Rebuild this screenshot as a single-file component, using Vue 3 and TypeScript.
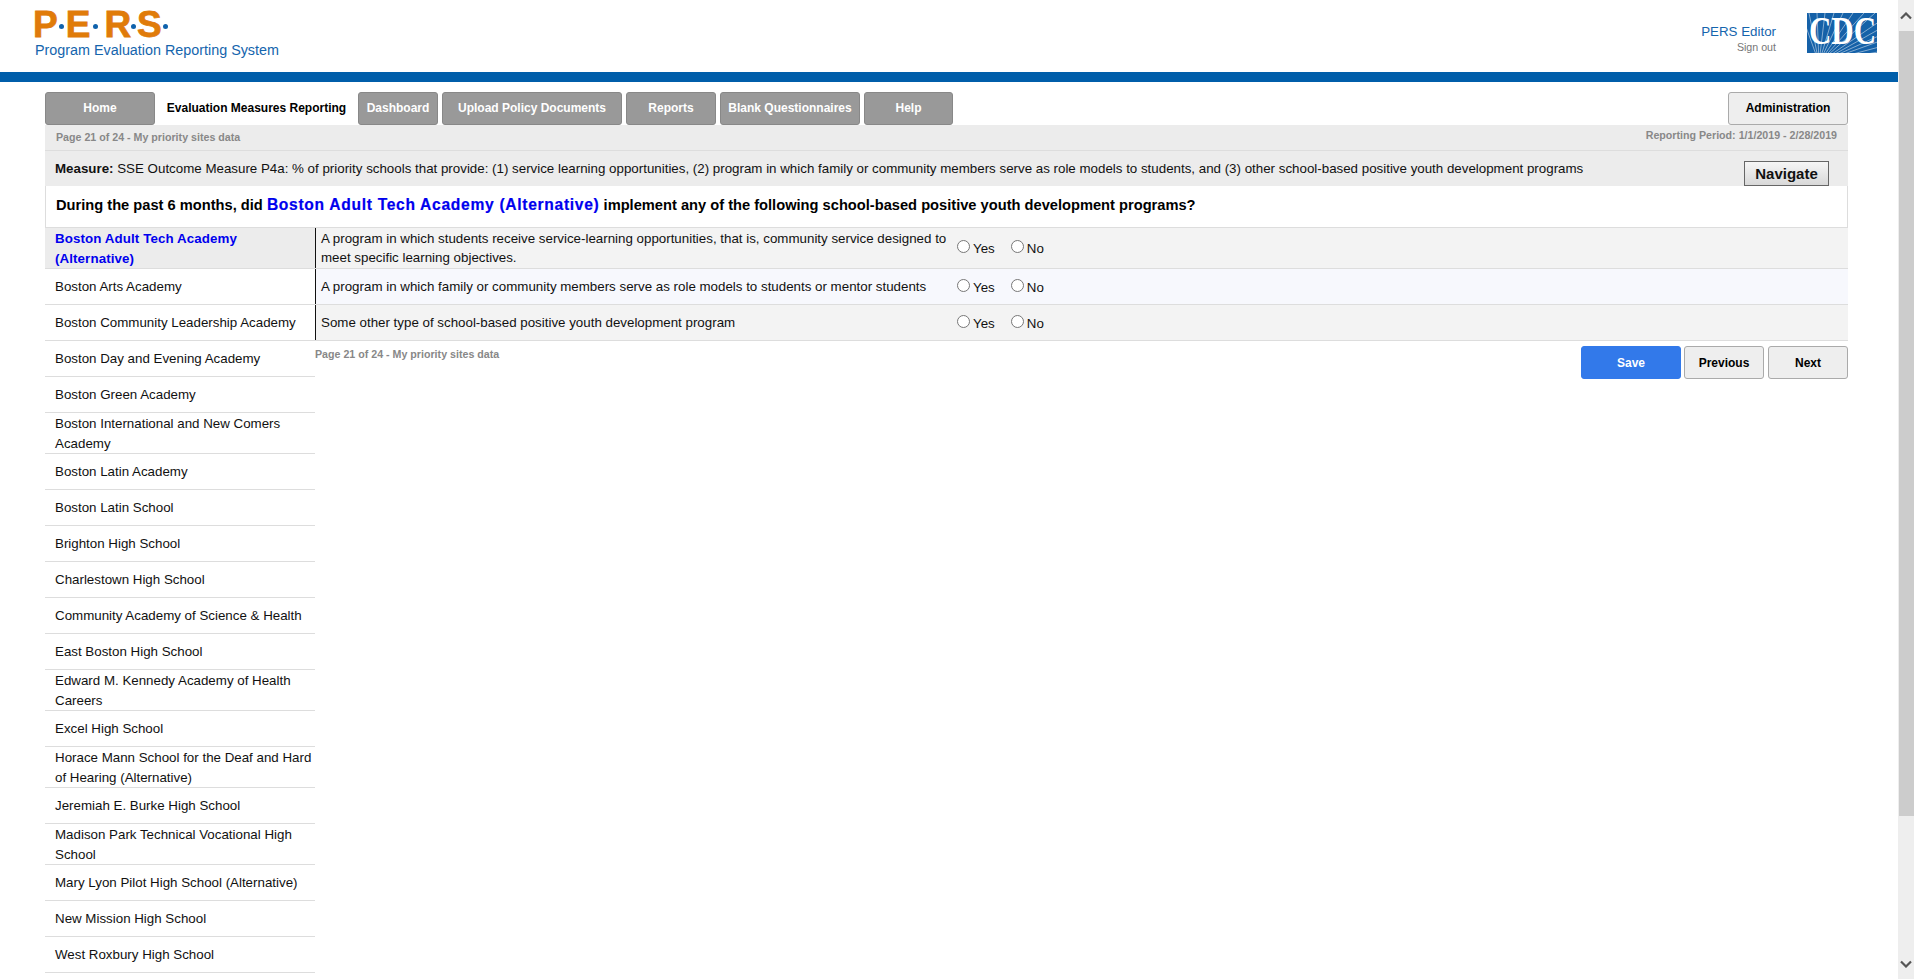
<script setup lang="ts">
const tabs = [
  { label: 'Home', w: 110 },
  { label: 'Evaluation Measures Reporting', w: 195, active: true },
  { label: 'Dashboard', w: 80 },
  { label: 'Upload Policy Documents', w: 180 },
  { label: 'Reports', w: 90 },
  { label: 'Blank Questionnaires', w: 140 },
  { label: 'Help', w: 89 },
]
const sites = [
  'Boston Adult Tech Academy (Alternative)',
  'Boston Arts Academy',
  'Boston Community Leadership Academy',
  'Boston Day and Evening Academy',
  'Boston Green Academy',
  'Boston International and New Comers Academy',
  'Boston Latin Academy',
  'Boston Latin School',
  'Brighton High School',
  'Charlestown High School',
  'Community Academy of Science & Health',
  'East Boston High School',
  'Edward M. Kennedy Academy of Health Careers',
  'Excel High School',
  'Horace Mann School for the Deaf and Hard of Hearing (Alternative)',
  'Jeremiah E. Burke High School',
  'Madison Park Technical Vocational High School',
  'Mary Lyon Pilot High School (Alternative)',
  'New Mission High School',
  'West Roxbury High School',
]
const questions = [
  'A program in which students receive service-learning opportunities, that is, community service designed to meet specific learning objectives.',
  'A program in which family or community members serve as role models to students or mentor students',
  'Some other type of school-based positive youth development program',
]
const rayTargets = [
  [-6, 0], [2, 0], [10, 0], [18, 0], [27, 0], [36, 0], [46, 0], [57, 0], [68, 0],
  [76, 6], [76, 14], [76, 21], [76, 27], [76, 33], [76, 38],
]
</script>

<template>
  <div class="page">
    <main class="main">
      <header class="header">
        <div class="brand">
          <div class="logo">
            <span class="l-p">P</span><i class="d-1"></i><span class="l-e">E</span><i class="d-2"></i><span class="l-r">R</span><i class="d-3"></i><span class="l-s">S</span><i class="d-4"></i>
          </div>
          <div class="tagline">Program Evaluation Reporting System</div>
        </div>
        <div class="user">
          <div class="user-name">PERS Editor</div>
          <div class="sign-out">Sign out</div>
        </div>
        <svg class="cdc" width="70" height="40" viewBox="0 0 70 40">
          <rect width="70" height="40" fill="#1561a8" />
          <g stroke="#fff" stroke-width="0.6" opacity="0.8">
            <line v-for="(t, r) in rayTargets" :key="r" x1="12" y1="50" :x2="t[0]" :y2="t[1]" />
          </g>
          <text x="2" y="23.8" transform="scale(1 1.3)" class="cdc-text">CDC</text>
        </svg>
      </header>
      <div class="bluebar"></div>

      <div class="content">
        <nav class="tabs">
          <button
            v-for="t in tabs"
            :key="t.label"
            class="tab"
            :class="{ active: t.active }"
            :style="{ width: t.w + 'px' }"
          >{{ t.label }}</button>
          <button class="tab admin">Administration</button>
        </nav>

        <div class="statusbar">
          <span class="status-left">Page 21 of 24 - My priority sites data</span>
          <span class="status-right">Reporting Period: 1/1/2019 - 2/28/2019</span>
        </div>

        <div class="measure">
          <div><b>Measure:</b> SSE Outcome Measure P4a: % of priority schools that provide: (1) service learning opportunities, (2) program in which family or community members serve as role models to students, and (3) other school-based positive youth development programs</div>
          <button class="navigate">Navigate</button>
        </div>

        <div class="question">
          During the past 6 months, did <span class="hl">Boston Adult Tech Academy (Alternative)</span> implement any of the following school-based positive youth development programs?
        </div>

        <div class="body">
          <ul class="sites">
            <li v-for="(s, i) in sites" :key="s" class="site" :class="{ current: i === 0 }"><span>{{ s }}</span></li>
          </ul>
          <div class="right">
            <div v-for="(q, i) in questions" :key="q" class="qrow" :class="'qrow' + i">
              <div class="qtext"><span>{{ q }}</span></div>
              <div class="qopts">
                <label><input type="radio" :name="'q' + i" />Yes</label>
                <label><input type="radio" :name="'q' + i" />No</label>
              </div>
            </div>
            <div class="footer">
              <span class="pageinfo">Page 21 of 24 - My priority sites data</span>
              <div class="actions">
                <button class="btn save">Save</button>
                <button class="btn prev">Previous</button>
                <button class="btn next">Next</button>
              </div>
            </div>
          </div>
        </div>
      </div>
    </main>
    <aside class="scrollbar">
      <div class="arrow">
        <svg width="12" height="8" viewBox="0 0 12 8"><path d="M1 6.5 6 1.5l5 5" fill="none" stroke="#555" stroke-width="2.2" /></svg>
      </div>
      <div class="thumb"></div>
      <div class="track-rest"></div>
      <div class="arrow">
        <svg width="12" height="8" viewBox="0 0 12 8"><path d="M1 1.5 6 6.5l5-5" fill="none" stroke="#555" stroke-width="2.2" /></svg>
      </div>
    </aside>
  </div>
</template>

<style>
html, body { margin: 0; overflow: hidden; background: #fff; }
</style>

<style scoped>
.page {
  display: flex;
  height: 979px;
  overflow: hidden;
  font-family: "Liberation Sans", Arial, sans-serif;
  font-size: 13.33px;
  color: #000;
}
.main { flex: 1; min-width: 0; }
.header {
  height: 72px;
  display: flex;
  box-sizing: border-box;
  padding: 11px 21px 0 35px;
}
.brand { flex: 1; }
.logo {
  display: flex;
  align-items: center;
  height: 28px;
  margin-left: -2px;
  color: #e07b0a;
  font-weight: 700;
  font-size: 37px;
  line-height: 28px;
  -webkit-text-stroke: 0.8px #e07b0a;
}
.logo i {
  width: 5px;
  height: 5px;
  margin-top: 3px;
  border-radius: 50%;
  background: #0f62ac;
}
.d-1 { margin-left: 1px; margin-right: 2px; }
.d-2 { margin-left: 3px; margin-right: 6px; }
.d-3 { margin-left: 0; margin-right: 1px; }
.d-4 { margin-left: 1px; }
.tagline { color: #1565ad; font-size: 14.35px; margin-top: 3px; line-height: 16px; }
.user { text-align: right; margin: 13px 31px 0 0; }
.user-name { color: #1565ad; font-size: 13.33px; line-height: 16px; }
.sign-out { color: #777; font-size: 10.67px; line-height: 13px; margin-top: 1px; }
.cdc { margin-top: 2px; display: block; }
.cdc-text { font-family: "Liberation Serif", serif; font-size: 31px; font-weight: 700; fill: #fff; }
.bluebar { height: 10px; background: #005eaa; }
.content { padding: 10px 50px 0 45px; }
.tabs { display: flex; gap: 4px; height: 33px; }
.tab {
  box-sizing: border-box;
  height: 33px;
  padding: 0 0 2px;
  border: 1px solid #888;
  border-radius: 3px;
  background: #999;
  color: #fff;
  font: 700 12px "Liberation Sans", Arial, sans-serif;
}
.tab.active { border: none; color: #000; border-radius: 0; background: #fff; }
.tab.admin { margin-left: auto; width: 120px; background: #eee; border: 1px solid #aaa; color: #000; }
.statusbar {
  display: flex;
  justify-content: space-between;
  box-sizing: border-box;
  height: 26px;
  padding: 0 11px;
  background: #ececec;
  border-bottom: 1px solid #ddd;
  color: #888;
  font-size: 10.67px;
  font-weight: 700;
}
.status-left { line-height: 13px; padding-top: 6px; }
.status-right { line-height: 13px; padding-top: 4px; }
.measure {
  display: flex;
  justify-content: space-between;
  box-sizing: border-box;
  height: 35px;
  padding: 0 19px 0 10px;
  background: #ececec;
  color: #111;
  font-size: 13.33px;
  align-items: center;
}
.navigate {
  box-sizing: border-box;
  width: 85px;
  height: 25px;
  margin-top: 10px;
  border: 1px solid #666;
  background: linear-gradient(#f6f6f6, #d8d8d8);
  font: 700 15px "Liberation Sans", Arial, sans-serif;
  color: #111;
  padding: 0;
}
.question {
  box-sizing: border-box;
  height: 42px;
  padding: 10px 10px 0;
  border: 1px solid #ddd;
  border-width: 0 1px 1px;
  font-size: 14.67px;
  font-weight: 700;
  line-height: 18px;
}
.hl { color: #0000ee; font-size: 15.6px; letter-spacing: 0.7px; line-height: 18px; -webkit-text-stroke: 0.2px #0000ee; }
.body { display: flex; align-items: flex-start; }
.sites { list-style: none; margin: 0; padding: 0; width: 270px; flex: none; }
.site {
  box-sizing: border-box;
  display: flex;
  align-items: center;
  min-height: 36px;
  padding: 1px 3px 0 10px;
  line-height: 19.5px;
  border-bottom: 1px solid #ddd;
  color: #111;
}
.current { background: #ececec; color: #0000ee; font-weight: 700; padding-right: 50px; letter-spacing: 0.1px; }
.right { flex: 1; min-width: 0; }
.qrow {
  display: flex;
  box-sizing: border-box;
  height: 36px;
  border-bottom: 1px solid #ddd;
  background: #f3f3f3;
}
.qrow0 { height: 41px; }
.qrow1 { background: #f7f8fd; }
.qtext {
  box-sizing: border-box;
  width: 641px;
  padding-left: 5px;
  padding-right: 2px;
  border-left: 1px solid #111;
  display: flex;
  align-items: center;
  line-height: 19.5px;
  color: #111;
}
.qopts { display: flex; align-items: center; gap: 15px; padding-top: 1px; color: #111; }
.qopts label { display: flex; align-items: center; }
.qopts input {
  appearance: none;
  box-sizing: border-box;
  margin: 0 3px 4px 1px;
  width: 13px;
  height: 13px;
  border: 1px solid #777;
  border-radius: 50%;
  background: #fff;
}
.footer { display: flex; justify-content: space-between; padding-top: 5px; }
.pageinfo { font-size: 10.67px; font-weight: 700; color: #888; line-height: 13px; padding-top: 2px; }
.actions { display: flex; gap: 4px; }
.btn {
  box-sizing: border-box;
  height: 33px;
  width: 80px;
  padding: 0;
  border: 1px solid #aaa;
  border-radius: 3px;
  background: #eee;
  font: 700 12px "Liberation Sans", Arial, sans-serif;
  color: #000;
}
.save { width: 100px; background: #3279ea; border-color: #3279ea; color: #fff; margin-right: -1px; }
.scrollbar {
  flex: none;
  width: 16px;
  background: #eee;
  display: flex;
  flex-direction: column;
}
.arrow { height: 31px; display: flex; align-items: center; justify-content: center; }
.thumb { height: 785px; background: #ccc; margin-left: 1px; }
.track-rest { flex: 1; }
</style>
